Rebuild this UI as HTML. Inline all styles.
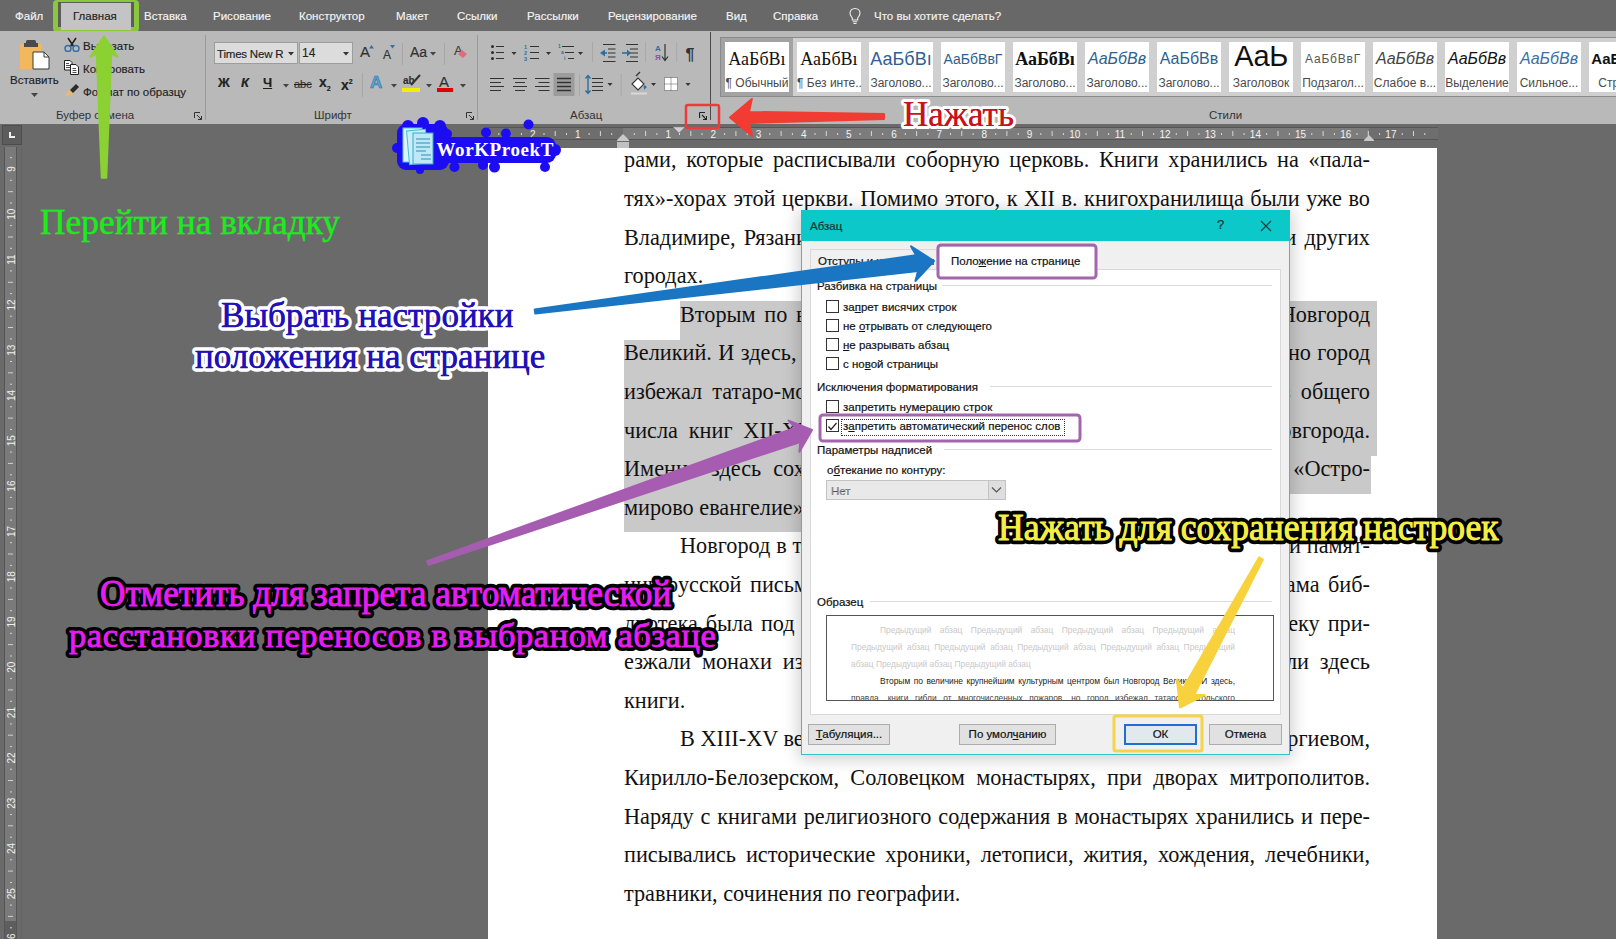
<!DOCTYPE html>
<html><head><meta charset="utf-8">
<style>
*{margin:0;padding:0;box-sizing:border-box}
html,body{width:1616px;height:939px;overflow:hidden;background:#6a6a6a;font-family:"Liberation Sans",sans-serif}
.abs{position:absolute}
#tabbar{position:absolute;left:0;top:0;width:1616px;height:31px;background:#686868}
.tab{position:absolute;top:9px;font-size:11.5px;color:#f4f4f4;white-space:nowrap;line-height:14px;-webkit-text-stroke:0.15px #f4f4f4}
#ribbon{position:absolute;left:0;top:31px;width:1616px;height:93px;background:#b9b9b9}
.rl{position:absolute;font-size:11.5px;color:#1e1e1e;white-space:nowrap;line-height:14px;-webkit-text-stroke:0.15px #1e1e1e}
.gl{position:absolute;top:108px;font-size:11.5px;color:#333;white-space:nowrap;line-height:14px}
.sep{position:absolute;width:1px;background:#9a9a9a}
#ruler{position:absolute;left:0;top:124px;width:1616px;height:24px;background:#6a6a6a}
#page{position:absolute;left:488px;top:148px;width:949px;height:800px;background:#fff}
.ln{position:absolute;left:624px;width:746px;height:38.6px;line-height:38.6px;font-family:"Liberation Serif",serif;font-size:22.25px;color:#111;white-space:nowrap}
.j{text-align:justify;text-align-last:justify}
.sel{position:absolute;background:#c9c9c9}
.dl{position:absolute;font-size:11.5px;line-height:14px;color:#111;white-space:nowrap;-webkit-text-stroke:0.2px #111}
.dl u{text-decoration:underline;text-underline-offset:1px}
.an{position:absolute;font-family:"Liberation Serif",serif;white-space:nowrap;line-height:40px}
.hr{position:absolute;height:1px;background:#dcdcdc}
.cb{position:absolute;left:826px;margin-top:-1px;width:13px;height:13px;background:#fff;border:1px solid #333}
.pv{position:absolute;left:24px;width:384px;font-size:8.4px;line-height:9px;white-space:nowrap;text-align:justify;text-align-last:justify;padding-right:0}
.btn{position:absolute;top:724px;height:21px;background:#e1e1e1;border:1px solid #adadad;font-size:11.5px;line-height:19px;text-align:center;color:#111;white-space:nowrap;-webkit-text-stroke:0.2px #111}
.btn u{text-decoration:underline}
</style></head><body>
<div id="tabbar">
  <div class="tab" style="left:15px">Файл</div>
  <div class="abs" style="left:53px;top:0;width:86px;height:32px;border:5px solid #8cc63f;border-top-width:2px;border-radius:4px;background:#5c5c5c"></div>
  <div class="abs" style="left:61px;top:3px;width:70px;height:27px;background:#c4c4c4"></div>
  <div class="tab" style="left:73px;color:#222;-webkit-text-stroke:0.15px #222">Главная</div>
  <div class="tab" style="left:144px">Вставка</div>
  <div class="tab" style="left:213px">Рисование</div>
  <div class="tab" style="left:299px">Конструктор</div>
  <div class="tab" style="left:396px">Макет</div>
  <div class="tab" style="left:457px">Ссылки</div>
  <div class="tab" style="left:527px">Рассылки</div>
  <div class="tab" style="left:608px">Рецензирование</div>
  <div class="tab" style="left:726px">Вид</div>
  <div class="tab" style="left:773px">Справка</div>
  <svg class="abs" style="left:848px;top:7px" width="14" height="18" viewBox="0 0 14 18"><path d="M7 1.5 C3.8 1.5 2 3.8 2 6.3 C2 8.5 3.6 9.8 4.3 11 V13 H9.7 V11 C10.4 9.8 12 8.5 12 6.3 C12 3.8 10.2 1.5 7 1.5Z" fill="none" stroke="#eee" stroke-width="1.1"/><path d="M4.8 14.8H9.2M5.5 16.5H8.5" stroke="#eee" stroke-width="1.1"/></svg>
  <div class="tab" style="left:874px">Что вы хотите сделать?</div>
</div>
<div id="ribbon">
</div>
<!-- clipboard group -->
<svg class="abs" style="left:17px;top:38px" width="36" height="33" viewBox="0 0 36 33">
  <rect x="3" y="6" width="22" height="25" rx="1" fill="#f2b95c"/>
  <rect x="9" y="2" width="10" height="5" rx="1.5" fill="#4a4a4a"/>
  <rect x="7" y="5" width="14" height="4" fill="#4a4a4a"/>
  <path d="M16 14 H27 L32 19 V31 H16 Z" fill="#fff" stroke="#3a3a3a" stroke-width="1"/>
  <path d="M27 14 V19 H32" fill="none" stroke="#3a3a3a" stroke-width="1"/>
</svg>
<div class="rl" style="left:10px;top:73px">Вставить</div>
<svg class="abs" style="left:31px;top:93px" width="7" height="4"><path d="M0 0 H7 L3.5 4Z" fill="#444"/></svg>
<svg class="abs" style="left:64px;top:37px" width="16" height="15" viewBox="0 0 16 15">
  <path d="M4 1 L10 10 M12 1 L6 10" stroke="#222" stroke-width="1.6" fill="none"/>
  <circle cx="4" cy="11.5" r="3" fill="none" stroke="#3b6ea5" stroke-width="1.5"/>
  <circle cx="12" cy="11.5" r="3" fill="none" stroke="#3b6ea5" stroke-width="1.5"/>
</svg>
<div class="rl" style="left:83px;top:39px">Вырезать</div>
<svg class="abs" style="left:64px;top:60px" width="15" height="15" viewBox="0 0 15 15">
  <path d="M0.5 0.5 H6 L8 2.5 V10 H0.5Z" fill="#fff" stroke="#222"/>
  <path d="M6.5 4.5 H12 L14.5 7 V14.5 H6.5Z" fill="#fff" stroke="#222"/>
  <path d="M2 3.5H5M2 5.5H6M2 7.5H6M8.5 8.5H12M8.5 10.5H12.5M8.5 12.5H12.5" stroke="#222" stroke-width="0.8"/>
</svg>
<div class="rl" style="left:83px;top:62px">Копировать</div>
<svg class="abs" style="left:64px;top:83px" width="16" height="16" viewBox="0 0 16 16">
  <path d="M1 14 L5 6 L10 11 Z" fill="#e6b97a"/>
  <path d="M6 7 L12 1 L15 4 L9 10Z" fill="#2a2a2a"/>
</svg>
<div class="rl" style="left:83px;top:85px">Формат по образцу</div>
<div class="gl" style="left:56px">Буфер обмена</div>
<svg class="abs" style="left:194px;top:112px" width="8" height="8"><path d="M0.5 0.5H6M0.5 0.5V6M3 3L7.5 7.5M7.5 4V7.5H4" stroke="#333" fill="none" stroke-width="1"/></svg>
<div class="sep" style="left:205px;top:35px;height:85px"></div>
<!-- font group -->
<div class="abs" style="left:214px;top:42px;width:84px;height:22px;background:#dcdcdc;border:1px solid #9d9d9d"></div>
<div class="rl" style="left:217px;top:47px;font-size:11.5px;letter-spacing:-0.2px;color:#222">Times New R</div>
<svg class="abs" style="left:288px;top:52px" width="6" height="4"><path d="M0 0H6L3 3.5Z" fill="#333"/></svg>
<div class="abs" style="left:299px;top:42px;width:54px;height:22px;background:#dcdcdc;border:1px solid #9d9d9d"></div>
<div class="rl" style="left:302px;top:46px;font-size:12px;color:#222">14</div>
<svg class="abs" style="left:343px;top:52px" width="6" height="4"><path d="M0 0H6L3 3.5Z" fill="#333"/></svg>
<div class="rl" style="left:360px;top:45px;font-size:15px;color:#333">A</div>
<svg class="abs" style="left:369px;top:45px" width="5" height="4"><path d="M0 3.5H5L2.5 0Z" fill="#3b6ea5"/></svg>
<div class="rl" style="left:383px;top:48px;font-size:12px;color:#333">A</div>
<svg class="abs" style="left:390px;top:45px" width="5" height="4"><path d="M0 0H5L2.5 3.5Z" fill="#3b6ea5"/></svg>
<div class="sep" style="left:402px;top:43px;height:22px;background:#a6a6a6"></div>
<div class="rl" style="left:410px;top:45px;font-size:14px;color:#333">Aa</div>
<svg class="abs" style="left:430px;top:52px" width="6" height="4"><path d="M0 0H6L3 3.5Z" fill="#444"/></svg>
<div class="sep" style="left:444px;top:43px;height:22px;background:#a6a6a6"></div>
<div class="rl" style="left:454px;top:44px;font-size:13px;color:#444">A</div>
<svg class="abs" style="left:457px;top:49px" width="11" height="10"><path d="M1 5 L5 1 L10 5 L6 9Z" fill="#e46a7a"/></svg>
<div class="rl" style="left:218px;top:76px;font-size:13px;font-weight:bold;color:#222">Ж</div>
<div class="rl" style="left:241px;top:76px;font-size:13px;font-weight:bold;font-style:italic;color:#222">К</div>
<div class="rl" style="left:263px;top:76px;font-size:13px;font-weight:bold;color:#222;text-decoration:underline">Ч</div>
<svg class="abs" style="left:283px;top:84px" width="6" height="4"><path d="M0 0H6L3 3.5Z" fill="#444"/></svg>
<div class="rl" style="left:294px;top:77px;font-size:11px;color:#333;text-decoration:line-through">abc</div>
<div class="rl" style="left:319px;top:75px;font-size:14px;font-weight:bold;color:#222">x<sub style="font-size:7px">2</sub></div>
<div class="rl" style="left:341px;top:75px;font-size:14px;font-weight:bold;color:#222">x<sup style="font-size:7px">2</sup></div>
<div class="sep" style="left:362px;top:73px;height:24px;background:#a6a6a6"></div>
<div class="rl" style="left:370px;top:76px;font-size:17px;color:#5aa6d8;font-weight:bold;-webkit-text-stroke:0.6px #2d6f9e">A</div>
<svg class="abs" style="left:391px;top:84px" width="6" height="4"><path d="M0 0H6L3 3.5Z" fill="#444"/></svg>
<div class="rl" style="left:403px;top:74px;font-size:10px;color:#333;font-weight:bold">ab</div>
<svg class="abs" style="left:408px;top:73px" width="14" height="14"><path d="M3 12 L12 2" stroke="#333" stroke-width="2"/></svg>
<div class="abs" style="left:402px;top:88px;width:18px;height:4px;background:#f0f000"></div>
<svg class="abs" style="left:426px;top:84px" width="6" height="4"><path d="M0 0H6L3 3.5Z" fill="#444"/></svg>
<div class="rl" style="left:439px;top:75px;font-size:15px;color:#333">A</div>
<div class="abs" style="left:437px;top:88px;width:16px;height:4px;background:#e00000"></div>
<svg class="abs" style="left:460px;top:84px" width="6" height="4"><path d="M0 0H6L3 3.5Z" fill="#444"/></svg>
<div class="gl" style="left:314px">Шрифт</div>
<svg class="abs" style="left:466px;top:112px" width="8" height="8"><path d="M0.5 0.5H6M0.5 0.5V6M3 3L7.5 7.5M7.5 4V7.5H4" stroke="#333" fill="none" stroke-width="1"/></svg>
<div class="sep" style="left:477px;top:35px;height:85px"></div>
<!-- paragraph group -->
<svg class="abs" style="left:480px;top:36px" width="230" height="64" viewBox="480 36 230 64">
  <g fill="#2e2e2e"><circle cx="492.5" cy="46.5" r="1.5"/><circle cx="492.5" cy="52.5" r="1.5"/><circle cx="492.5" cy="58.5" r="1.5"/></g>
  <path d="M496 46.5H504M496 52.5H504M496 58.5H504" stroke="#333" stroke-width="1.2"/>
  <path d="M511.5 52H516.5L514 55Z" fill="#333"/>
  <g font-size="5.5" fill="#2d6f9e" font-family="Liberation Sans" font-weight="bold"><text x="524" y="48.5">1</text><text x="524" y="54.5">2</text><text x="524" y="60.5">3</text></g>
  <path d="M530 46.5H539M530 52.5H539M530 58.5H539" stroke="#333" stroke-width="1.2"/>
  <path d="M546 52H551L548.5 55Z" fill="#333"/>
  <g font-size="5" fill="#2d6f9e" font-family="Liberation Sans" font-weight="bold"><text x="558" y="48">1</text><text x="561" y="54">a</text><text x="564" y="60">i</text></g>
  <path d="M562 46.5H574M565 52.5H574M568 58.5H574" stroke="#333" stroke-width="1.1"/>
  <path d="M578 52H583L580.5 55Z" fill="#333"/>
  <path d="M592.5 42V62" stroke="#a8a8a8"/>
  <path d="M603 44.5H615.5M608 49H615.5M608 53H615.5M608 57H615.5M603 61.5H615.5" stroke="#333" stroke-width="1.2"/>
  <path d="M600 53L605 49.5V56.5Z" fill="#2d6f9e"/><path d="M603 53H607" stroke="#2d6f9e" stroke-width="1.6"/>
  <path d="M626 44.5H638M630 49H638M630 53H638M630 57H638M626 61.5H638" stroke="#333" stroke-width="1.2"/>
  <path d="M627 49.5L631 53L627 56.5Z" fill="#2d6f9e"/><path d="M622 53H628" stroke="#2d6f9e" stroke-width="1.6"/>
  <path d="M645.5 42V62" stroke="#a8a8a8"/>
  <g font-size="8" font-weight="bold" font-family="Liberation Sans"><text x="655" y="51" fill="#2d6f9e">A</text><text x="655" y="60" fill="#8a4fa8">Я</text></g>
  <path d="M665 44V60M662 56.5L665 60.5L668 56.5" stroke="#333" stroke-width="1.2" fill="none"/>
  <path d="M676.7 42V62" stroke="#a8a8a8"/>
  <text x="685.5" y="60" font-size="16" font-weight="bold" fill="#333" font-family="Liberation Sans">¶</text>
  <path d="M490 78.5H504M490 82.5H501M490 86.5H504M490 90.5H501" stroke="#333" stroke-width="1.2"/>
  <path d="M513 78.5H527M515 82.5H525M513 86.5H527M515 90.5H525" stroke="#333" stroke-width="1.2"/>
  <path d="M535 78.5H549.5M538.5 82.5H549.5M535 86.5H549.5M538.5 90.5H549.5" stroke="#333" stroke-width="1.2"/>
  <rect x="553.5" y="73" width="21" height="23" fill="#9c9c9c"/>
  <path d="M557 78.5H571M557 82.5H571M557 86.5H571M557 90.5H571" stroke="#333" stroke-width="1.3"/>
  <path d="M579.5 74V96" stroke="#a8a8a8"/>
  <path d="M592 78.5H603M592 82.5H603M592 86.5H603M592 90.5H603" stroke="#333" stroke-width="1.2"/>
  <path d="M588 76V93M585.5 78.5L588 75.5L590.5 78.5M585.5 90.5L588 93.5L590.5 90.5" stroke="#2d6f9e" stroke-width="1.4" fill="none"/>
  <path d="M607.5 83H612.5L610 86Z" fill="#333"/>
  <path d="M621.2 74V96" stroke="#a8a8a8"/>
  <path d="M632 84L638 78L644 84L638 90Z" fill="#fff" stroke="#333" stroke-width="1.1"/>
  <path d="M636 76L640 72" stroke="#333" stroke-width="1.2"/>
  <path d="M644 85Q646 88 644 90" fill="#2d6f9e"/><circle cx="645" cy="87" r="1.5" fill="#2d6f9e"/>
  <path d="M631 93.5H647" stroke="#d8d8d8" stroke-width="2"/>
  <path d="M651 83H656L653.5 86Z" fill="#333"/>
  <rect x="664.5" y="77.5" width="13" height="13" fill="#fff"/>
  <path d="M664.5 77.5H677.5V90.5H664.5Z M664.5 84H677.5M671 77.5V90.5" stroke="#555" stroke-width="1" stroke-dasharray="1 1" fill="none"/>
  <path d="M685.5 83H690.5L688 86Z" fill="#333"/>
</svg>
<div class="gl" style="left:570px">Абзац</div>
<svg class="abs" style="left:699px;top:112px" width="8" height="8"><path d="M0.5 0.5H6M0.5 0.5V6M3 3L7.5 7.5M7.5 4V7.5H4" stroke="#222" fill="none" stroke-width="1.2"/></svg>
<div class="sep" style="left:710px;top:32px;height:88px;background:#4a4a4a"></div>
<!-- styles gallery -->
<div class="abs" style="left:720px;top:37px;width:900px;height:60px;background:#d0d0d0;border:1px solid #8a8a8a"></div>
<div class="abs" style="left:721px;top:38px;width:72px;height:58px;background:#a3a3a3"></div>
<div class="abs" style="left:725px;top:42px;width:64px;height:50px;background:#fff;overflow:hidden"><div class="abs" style="left:0;width:64px;text-align:center;top:5px;white-space:nowrap;line-height:24px;font-family:'Liberation Serif';font-size:18px;color:#111">АаБбВı</div><div class="abs" style="left:0;width:64px;text-align:center;top:34px;white-space:nowrap;font-size:12px;line-height:14px;color:#4a4a4a">¶ Обычный</div></div>
<div class="abs" style="left:797px;top:42px;width:64px;height:50px;background:#fff;overflow:hidden"><div class="abs" style="left:0;width:64px;text-align:center;top:5px;white-space:nowrap;line-height:24px;font-family:'Liberation Serif';font-size:18px;color:#111">АаБбВı</div><div class="abs" style="left:0;width:64px;text-align:center;top:34px;white-space:nowrap;font-size:12px;line-height:14px;color:#4a4a4a">¶ Без инте...</div></div>
<div class="abs" style="left:869px;top:42px;width:64px;height:50px;background:#fff;overflow:hidden"><div class="abs" style="left:0;width:64px;text-align:center;top:5px;white-space:nowrap;line-height:24px;font-family:'Liberation Sans';font-size:18px;color:#2f5f8f">АаБбВı</div><div class="abs" style="left:0;width:64px;text-align:center;top:34px;white-space:nowrap;font-size:12px;line-height:14px;color:#4a4a4a">Заголово...</div></div>
<div class="abs" style="left:941px;top:42px;width:64px;height:50px;background:#fff;overflow:hidden"><div class="abs" style="left:0;width:64px;text-align:center;top:5px;white-space:nowrap;line-height:24px;font-family:'Liberation Sans';font-size:14px;color:#2f5f8f">АаБбВвГ</div><div class="abs" style="left:0;width:64px;text-align:center;top:34px;white-space:nowrap;font-size:12px;line-height:14px;color:#4a4a4a">Заголово...</div></div>
<div class="abs" style="left:1013px;top:42px;width:64px;height:50px;background:#fff;overflow:hidden"><div class="abs" style="left:0;width:64px;text-align:center;top:5px;white-space:nowrap;line-height:24px;font-family:'Liberation Serif';font-size:18px;font-weight:bold;color:#111">АаБбВı</div><div class="abs" style="left:0;width:64px;text-align:center;top:34px;white-space:nowrap;font-size:12px;line-height:14px;color:#4a4a4a">Заголово...</div></div>
<div class="abs" style="left:1085px;top:42px;width:64px;height:50px;background:#fff;overflow:hidden"><div class="abs" style="left:0;width:64px;text-align:center;top:5px;white-space:nowrap;line-height:24px;font-family:'Liberation Sans';font-size:16px;font-style:italic;color:#2f5f8f">АаБбВв</div><div class="abs" style="left:0;width:64px;text-align:center;top:34px;white-space:nowrap;font-size:12px;line-height:14px;color:#4a4a4a">Заголово...</div></div>
<div class="abs" style="left:1157px;top:42px;width:64px;height:50px;background:#fff;overflow:hidden"><div class="abs" style="left:0;width:64px;text-align:center;top:5px;white-space:nowrap;line-height:24px;font-family:'Liberation Sans';font-size:16px;color:#2f5f8f">АаБбВв</div><div class="abs" style="left:0;width:64px;text-align:center;top:34px;white-space:nowrap;font-size:12px;line-height:14px;color:#4a4a4a">Заголово...</div></div>
<div class="abs" style="left:1229px;top:42px;width:64px;height:50px;background:#fff;overflow:hidden"><div class="abs" style="left:0;width:64px;text-align:center;top:5px;white-space:nowrap;line-height:24px;font-family:'Liberation Sans';font-size:29px;color:#111;letter-spacing:-0.5px;margin-top:-3px">АаЬ</div><div class="abs" style="left:0;width:64px;text-align:center;top:34px;white-space:nowrap;font-size:12px;line-height:14px;color:#4a4a4a">Заголовок</div></div>
<div class="abs" style="left:1301px;top:42px;width:64px;height:50px;background:#fff;overflow:hidden"><div class="abs" style="left:0;width:64px;text-align:center;top:5px;white-space:nowrap;line-height:24px;font-family:'Liberation Sans';font-size:12px;color:#555;letter-spacing:0.8px">АаБбВвГ</div><div class="abs" style="left:0;width:64px;text-align:center;top:34px;white-space:nowrap;font-size:12px;line-height:14px;color:#4a4a4a">Подзагол...</div></div>
<div class="abs" style="left:1373px;top:42px;width:64px;height:50px;background:#fff;overflow:hidden"><div class="abs" style="left:0;width:64px;text-align:center;top:5px;white-space:nowrap;line-height:24px;font-family:'Liberation Sans';font-size:16px;font-style:italic;color:#444">АаБбВв</div><div class="abs" style="left:0;width:64px;text-align:center;top:34px;white-space:nowrap;font-size:12px;line-height:14px;color:#4a4a4a">Слабое в...</div></div>
<div class="abs" style="left:1445px;top:42px;width:64px;height:50px;background:#fff;overflow:hidden"><div class="abs" style="left:0;width:64px;text-align:center;top:5px;white-space:nowrap;line-height:24px;font-family:'Liberation Sans';font-size:16px;font-style:italic;color:#111">АаБбВв</div><div class="abs" style="left:0;width:64px;text-align:center;top:34px;white-space:nowrap;font-size:12px;line-height:14px;color:#4a4a4a">Выделение</div></div>
<div class="abs" style="left:1517px;top:42px;width:64px;height:50px;background:#fff;overflow:hidden"><div class="abs" style="left:0;width:64px;text-align:center;top:5px;white-space:nowrap;line-height:24px;font-family:'Liberation Sans';font-size:16px;font-style:italic;color:#3a6ea5">АаБбВв</div><div class="abs" style="left:0;width:64px;text-align:center;top:34px;white-space:nowrap;font-size:12px;line-height:14px;color:#4a4a4a">Сильное...</div></div>
<div class="abs" style="left:1589px;top:42px;width:64px;height:50px;background:#fff;overflow:hidden"><div class="abs" style="left:0;width:64px;text-align:center;top:5px;white-space:nowrap;line-height:24px;font-family:'Liberation Sans';font-size:15px;font-weight:bold;color:#111">АаБбВв</div><div class="abs" style="left:0;width:64px;text-align:center;top:34px;white-space:nowrap;font-size:12px;line-height:14px;color:#4a4a4a">Строгий</div></div>
<div class="gl" style="left:1209px">Стили</div>

<div class="abs" style="left:488px;top:127px;width:950px;height:13px;background:#6e6e6e;border-top:1px solid #555;border-bottom:1px solid #555"></div>
<div class="abs" style="left:623px;top:128px;width:746px;height:11px;background:#7c7c7c"></div>
<svg class="abs" style="left:488px;top:124px" width="950" height="24" viewBox="488 124 950 24">
<rect x="498.3" y="133" width="1" height="2" fill="#d8d8d8"/>
<rect x="509.6" y="131" width="1" height="5" fill="#d8d8d8"/>
<rect x="520.9" y="133" width="1" height="2" fill="#d8d8d8"/>
<text x="532.7" y="137.5" font-size="10" fill="#f2f2f2" text-anchor="middle" font-family="Liberation Sans">2</text>
<rect x="543.5" y="133" width="1" height="2" fill="#d8d8d8"/>
<rect x="554.7" y="131" width="1" height="5" fill="#d8d8d8"/>
<rect x="566.0" y="133" width="1" height="2" fill="#d8d8d8"/>
<text x="577.8" y="137.5" font-size="10" fill="#f2f2f2" text-anchor="middle" font-family="Liberation Sans">1</text>
<rect x="588.6" y="133" width="1" height="2" fill="#d8d8d8"/>
<rect x="599.9" y="131" width="1" height="5" fill="#d8d8d8"/>
<rect x="611.2" y="133" width="1" height="2" fill="#d8d8d8"/>
<rect x="633.8" y="133" width="1" height="2" fill="#d8d8d8"/>
<rect x="645.1" y="131" width="1" height="5" fill="#d8d8d8"/>
<rect x="656.4" y="133" width="1" height="2" fill="#d8d8d8"/>
<text x="668.2" y="137.5" font-size="10" fill="#f2f2f2" text-anchor="middle" font-family="Liberation Sans">1</text>
<rect x="679.0" y="133" width="1" height="2" fill="#d8d8d8"/>
<rect x="690.3" y="131" width="1" height="5" fill="#d8d8d8"/>
<rect x="701.5" y="133" width="1" height="2" fill="#d8d8d8"/>
<text x="713.3" y="137.5" font-size="10" fill="#f2f2f2" text-anchor="middle" font-family="Liberation Sans">2</text>
<rect x="724.1" y="133" width="1" height="2" fill="#d8d8d8"/>
<rect x="735.4" y="131" width="1" height="5" fill="#d8d8d8"/>
<rect x="746.7" y="133" width="1" height="2" fill="#d8d8d8"/>
<text x="758.5" y="137.5" font-size="10" fill="#f2f2f2" text-anchor="middle" font-family="Liberation Sans">3</text>
<rect x="769.3" y="133" width="1" height="2" fill="#d8d8d8"/>
<rect x="780.6" y="131" width="1" height="5" fill="#d8d8d8"/>
<rect x="791.9" y="133" width="1" height="2" fill="#d8d8d8"/>
<text x="803.7" y="137.5" font-size="10" fill="#f2f2f2" text-anchor="middle" font-family="Liberation Sans">4</text>
<rect x="814.5" y="133" width="1" height="2" fill="#d8d8d8"/>
<rect x="825.8" y="131" width="1" height="5" fill="#d8d8d8"/>
<rect x="837.1" y="133" width="1" height="2" fill="#d8d8d8"/>
<text x="848.9" y="137.5" font-size="10" fill="#f2f2f2" text-anchor="middle" font-family="Liberation Sans">5</text>
<rect x="859.6" y="133" width="1" height="2" fill="#d8d8d8"/>
<rect x="870.9" y="131" width="1" height="5" fill="#d8d8d8"/>
<rect x="882.2" y="133" width="1" height="2" fill="#d8d8d8"/>
<text x="894.0" y="137.5" font-size="10" fill="#f2f2f2" text-anchor="middle" font-family="Liberation Sans">6</text>
<rect x="904.8" y="133" width="1" height="2" fill="#d8d8d8"/>
<rect x="916.1" y="131" width="1" height="5" fill="#d8d8d8"/>
<rect x="927.4" y="133" width="1" height="2" fill="#d8d8d8"/>
<text x="939.2" y="137.5" font-size="10" fill="#f2f2f2" text-anchor="middle" font-family="Liberation Sans">7</text>
<rect x="950.0" y="133" width="1" height="2" fill="#d8d8d8"/>
<rect x="961.3" y="131" width="1" height="5" fill="#d8d8d8"/>
<rect x="972.6" y="133" width="1" height="2" fill="#d8d8d8"/>
<text x="984.4" y="137.5" font-size="10" fill="#f2f2f2" text-anchor="middle" font-family="Liberation Sans">8</text>
<rect x="995.2" y="133" width="1" height="2" fill="#d8d8d8"/>
<rect x="1006.4" y="131" width="1" height="5" fill="#d8d8d8"/>
<rect x="1017.7" y="133" width="1" height="2" fill="#d8d8d8"/>
<text x="1029.5" y="137.5" font-size="10" fill="#f2f2f2" text-anchor="middle" font-family="Liberation Sans">9</text>
<rect x="1040.3" y="133" width="1" height="2" fill="#d8d8d8"/>
<rect x="1051.6" y="131" width="1" height="5" fill="#d8d8d8"/>
<rect x="1062.9" y="133" width="1" height="2" fill="#d8d8d8"/>
<text x="1074.7" y="137.5" font-size="10" fill="#f2f2f2" text-anchor="middle" font-family="Liberation Sans">10</text>
<rect x="1085.5" y="133" width="1" height="2" fill="#d8d8d8"/>
<rect x="1096.8" y="131" width="1" height="5" fill="#d8d8d8"/>
<rect x="1108.1" y="133" width="1" height="2" fill="#d8d8d8"/>
<text x="1119.9" y="137.5" font-size="10" fill="#f2f2f2" text-anchor="middle" font-family="Liberation Sans">11</text>
<rect x="1130.7" y="133" width="1" height="2" fill="#d8d8d8"/>
<rect x="1142.0" y="131" width="1" height="5" fill="#d8d8d8"/>
<rect x="1153.2" y="133" width="1" height="2" fill="#d8d8d8"/>
<text x="1165.0" y="137.5" font-size="10" fill="#f2f2f2" text-anchor="middle" font-family="Liberation Sans">12</text>
<rect x="1175.8" y="133" width="1" height="2" fill="#d8d8d8"/>
<rect x="1187.1" y="131" width="1" height="5" fill="#d8d8d8"/>
<rect x="1198.4" y="133" width="1" height="2" fill="#d8d8d8"/>
<text x="1210.2" y="137.5" font-size="10" fill="#f2f2f2" text-anchor="middle" font-family="Liberation Sans">13</text>
<rect x="1221.0" y="133" width="1" height="2" fill="#d8d8d8"/>
<rect x="1232.3" y="131" width="1" height="5" fill="#d8d8d8"/>
<rect x="1243.6" y="133" width="1" height="2" fill="#d8d8d8"/>
<text x="1255.4" y="137.5" font-size="10" fill="#f2f2f2" text-anchor="middle" font-family="Liberation Sans">14</text>
<rect x="1266.2" y="133" width="1" height="2" fill="#d8d8d8"/>
<rect x="1277.5" y="131" width="1" height="5" fill="#d8d8d8"/>
<rect x="1288.8" y="133" width="1" height="2" fill="#d8d8d8"/>
<text x="1300.6" y="137.5" font-size="10" fill="#f2f2f2" text-anchor="middle" font-family="Liberation Sans">15</text>
<rect x="1311.3" y="133" width="1" height="2" fill="#d8d8d8"/>
<rect x="1322.6" y="131" width="1" height="5" fill="#d8d8d8"/>
<rect x="1333.9" y="133" width="1" height="2" fill="#d8d8d8"/>
<text x="1345.7" y="137.5" font-size="10" fill="#f2f2f2" text-anchor="middle" font-family="Liberation Sans">16</text>
<rect x="1356.5" y="133" width="1" height="2" fill="#d8d8d8"/>
<rect x="1367.8" y="131" width="1" height="5" fill="#d8d8d8"/>
<rect x="1379.1" y="133" width="1" height="2" fill="#d8d8d8"/>
<text x="1390.9" y="137.5" font-size="10" fill="#f2f2f2" text-anchor="middle" font-family="Liberation Sans">17</text>
<rect x="1401.7" y="133" width="1" height="2" fill="#d8d8d8"/>
<rect x="1413.0" y="131" width="1" height="5" fill="#d8d8d8"/>
<rect x="1424.3" y="133" width="1" height="2" fill="#d8d8d8"/>


</svg>
<svg class="abs" style="left:610px;top:124px" width="80" height="24"><path d="M63 3 L75 3 L69 9Z" fill="#d0d0d0" stroke="#888" stroke-width="0.6"/><path d="M7 16 L13 10 L19 16 V17 H7Z" fill="#c8c8c8"/><rect x="7" y="18" width="12" height="6" fill="#c0c0c0"/></svg>
<svg class="abs" style="left:1360px;top:124px" width="20" height="24"><path d="M4 16 L9 11 L14 16 V17 H4Z" fill="#c8c8c8"/></svg>
<div class="abs" style="left:0;top:124px;width:23px;height:815px;background:#6a6a6a"></div>
<div class="abs" style="left:2px;top:125px;width:20px;height:20px;background:#5c5c5c;border:1px solid #4d4d4d"></div>
<svg class="abs" style="left:7px;top:130px" width="10" height="10"><path d="M3 2 V7 H8" stroke="#f0f0f0" stroke-width="2" fill="none"/></svg>
<div class="abs" style="left:4px;top:147px;width:13px;height:792px;background:#7a7a7a;border-left:1px solid #555;border-right:1px solid #555"></div>
<div class="abs" style="left:5px;top:921px;width:11px;height:18px;background:#5e5e5e"></div>
<div class="abs" style="left:21px;top:147px;width:1px;height:792px;background:#626262"></div>
<svg class="abs" style="left:0;top:147px" width="23" height="792" viewBox="0 147 23 792">
<text x="0" y="0" transform="translate(14.5 123.7) rotate(-90)" font-size="10" fill="#f0f0f0" text-anchor="middle" font-family="Liberation Sans">8</text>
<rect x="10" y="134.5" width="2" height="1" fill="#d0d0d0"/>
<rect x="8" y="145.8" width="5" height="1" fill="#d0d0d0"/>
<rect x="10" y="157.2" width="2" height="1" fill="#d0d0d0"/>
<text x="0" y="0" transform="translate(14.5 169.0) rotate(-90)" font-size="10" fill="#f0f0f0" text-anchor="middle" font-family="Liberation Sans">9</text>
<rect x="10" y="179.8" width="2" height="1" fill="#d0d0d0"/>
<rect x="8" y="191.2" width="5" height="1" fill="#d0d0d0"/>
<rect x="10" y="202.5" width="2" height="1" fill="#d0d0d0"/>
<text x="0" y="0" transform="translate(14.5 214.3) rotate(-90)" font-size="10" fill="#f0f0f0" text-anchor="middle" font-family="Liberation Sans">10</text>
<rect x="10" y="225.1" width="2" height="1" fill="#d0d0d0"/>
<rect x="8" y="236.5" width="5" height="1" fill="#d0d0d0"/>
<rect x="10" y="247.8" width="2" height="1" fill="#d0d0d0"/>
<text x="0" y="0" transform="translate(14.5 259.6) rotate(-90)" font-size="10" fill="#f0f0f0" text-anchor="middle" font-family="Liberation Sans">11</text>
<rect x="10" y="270.4" width="2" height="1" fill="#d0d0d0"/>
<rect x="8" y="281.8" width="5" height="1" fill="#d0d0d0"/>
<rect x="10" y="293.1" width="2" height="1" fill="#d0d0d0"/>
<text x="0" y="0" transform="translate(14.5 304.9) rotate(-90)" font-size="10" fill="#f0f0f0" text-anchor="middle" font-family="Liberation Sans">12</text>
<rect x="10" y="315.7" width="2" height="1" fill="#d0d0d0"/>
<rect x="8" y="327.0" width="5" height="1" fill="#d0d0d0"/>
<rect x="10" y="338.4" width="2" height="1" fill="#d0d0d0"/>
<text x="0" y="0" transform="translate(14.5 350.2) rotate(-90)" font-size="10" fill="#f0f0f0" text-anchor="middle" font-family="Liberation Sans">13</text>
<rect x="10" y="361.0" width="2" height="1" fill="#d0d0d0"/>
<rect x="8" y="372.3" width="5" height="1" fill="#d0d0d0"/>
<rect x="10" y="383.7" width="2" height="1" fill="#d0d0d0"/>
<text x="0" y="0" transform="translate(14.5 395.5) rotate(-90)" font-size="10" fill="#f0f0f0" text-anchor="middle" font-family="Liberation Sans">14</text>
<rect x="10" y="406.3" width="2" height="1" fill="#d0d0d0"/>
<rect x="8" y="417.6" width="5" height="1" fill="#d0d0d0"/>
<rect x="10" y="429.0" width="2" height="1" fill="#d0d0d0"/>
<text x="0" y="0" transform="translate(14.5 440.8) rotate(-90)" font-size="10" fill="#f0f0f0" text-anchor="middle" font-family="Liberation Sans">15</text>
<rect x="10" y="451.6" width="2" height="1" fill="#d0d0d0"/>
<rect x="8" y="462.9" width="5" height="1" fill="#d0d0d0"/>
<rect x="10" y="474.3" width="2" height="1" fill="#d0d0d0"/>
<text x="0" y="0" transform="translate(14.5 486.1) rotate(-90)" font-size="10" fill="#f0f0f0" text-anchor="middle" font-family="Liberation Sans">16</text>
<rect x="10" y="496.9" width="2" height="1" fill="#d0d0d0"/>
<rect x="8" y="508.2" width="5" height="1" fill="#d0d0d0"/>
<rect x="10" y="519.6" width="2" height="1" fill="#d0d0d0"/>
<text x="0" y="0" transform="translate(14.5 531.4) rotate(-90)" font-size="10" fill="#f0f0f0" text-anchor="middle" font-family="Liberation Sans">17</text>
<rect x="10" y="542.2" width="2" height="1" fill="#d0d0d0"/>
<rect x="8" y="553.5" width="5" height="1" fill="#d0d0d0"/>
<rect x="10" y="564.9" width="2" height="1" fill="#d0d0d0"/>
<text x="0" y="0" transform="translate(14.5 576.7) rotate(-90)" font-size="10" fill="#f0f0f0" text-anchor="middle" font-family="Liberation Sans">18</text>
<rect x="10" y="587.5" width="2" height="1" fill="#d0d0d0"/>
<rect x="8" y="598.9" width="5" height="1" fill="#d0d0d0"/>
<rect x="10" y="610.2" width="2" height="1" fill="#d0d0d0"/>
<text x="0" y="0" transform="translate(14.5 622.0) rotate(-90)" font-size="10" fill="#f0f0f0" text-anchor="middle" font-family="Liberation Sans">19</text>
<rect x="10" y="632.8" width="2" height="1" fill="#d0d0d0"/>
<rect x="8" y="644.1" width="5" height="1" fill="#d0d0d0"/>
<rect x="10" y="655.5" width="2" height="1" fill="#d0d0d0"/>
<text x="0" y="0" transform="translate(14.5 667.3) rotate(-90)" font-size="10" fill="#f0f0f0" text-anchor="middle" font-family="Liberation Sans">20</text>
<rect x="10" y="678.1" width="2" height="1" fill="#d0d0d0"/>
<rect x="8" y="689.4" width="5" height="1" fill="#d0d0d0"/>
<rect x="10" y="700.8" width="2" height="1" fill="#d0d0d0"/>
<text x="0" y="0" transform="translate(14.5 712.6) rotate(-90)" font-size="10" fill="#f0f0f0" text-anchor="middle" font-family="Liberation Sans">21</text>
<rect x="10" y="723.4" width="2" height="1" fill="#d0d0d0"/>
<rect x="8" y="734.7" width="5" height="1" fill="#d0d0d0"/>
<rect x="10" y="746.1" width="2" height="1" fill="#d0d0d0"/>
<text x="0" y="0" transform="translate(14.5 757.9) rotate(-90)" font-size="10" fill="#f0f0f0" text-anchor="middle" font-family="Liberation Sans">22</text>
<rect x="10" y="768.7" width="2" height="1" fill="#d0d0d0"/>
<rect x="8" y="780.0" width="5" height="1" fill="#d0d0d0"/>
<rect x="10" y="791.4" width="2" height="1" fill="#d0d0d0"/>
<text x="0" y="0" transform="translate(14.5 803.2) rotate(-90)" font-size="10" fill="#f0f0f0" text-anchor="middle" font-family="Liberation Sans">23</text>
<rect x="10" y="814.0" width="2" height="1" fill="#d0d0d0"/>
<rect x="8" y="825.3" width="5" height="1" fill="#d0d0d0"/>
<rect x="10" y="836.7" width="2" height="1" fill="#d0d0d0"/>
<text x="0" y="0" transform="translate(14.5 848.5) rotate(-90)" font-size="10" fill="#f0f0f0" text-anchor="middle" font-family="Liberation Sans">24</text>
<rect x="10" y="859.3" width="2" height="1" fill="#d0d0d0"/>
<rect x="8" y="870.6" width="5" height="1" fill="#d0d0d0"/>
<rect x="10" y="882.0" width="2" height="1" fill="#d0d0d0"/>
<text x="0" y="0" transform="translate(14.5 893.8) rotate(-90)" font-size="10" fill="#f0f0f0" text-anchor="middle" font-family="Liberation Sans">25</text>
<rect x="10" y="904.6" width="2" height="1" fill="#d0d0d0"/>
<rect x="8" y="915.9" width="5" height="1" fill="#d0d0d0"/>
<rect x="10" y="927.3" width="2" height="1" fill="#d0d0d0"/>
<text x="0" y="0" transform="translate(14.5 939.1) rotate(-90)" font-size="10" fill="#f0f0f0" text-anchor="middle" font-family="Liberation Sans">26</text>
<rect x="10" y="949.9" width="2" height="1" fill="#d0d0d0"/>
<rect x="8" y="961.2" width="5" height="1" fill="#d0d0d0"/>
<rect x="10" y="972.6" width="2" height="1" fill="#d0d0d0"/>
</svg>
<div id="page"></div>
<div class="sel" style="left:680px;top:301px;width:697px;height:39px"></div>
<div class="sel" style="left:624px;top:339.6px;width:753px;height:116px"></div>
<div class="sel" style="left:624px;top:455px;width:747px;height:39px"></div>
<div class="sel" style="left:624px;top:493.5px;width:300px;height:38.5px"></div>
<div class="ln j" style="top:141.4px;left:624px;width:746px">рами, которые расписывали соборную церковь. Книги хранились на «пала-</div>
<div class="ln j" style="top:180.0px;left:624px;width:746px">тях»-хорах этой церкви. Помимо этого, к XII в. книгохранилища были уже во</div>
<div class="ln j" style="top:218.6px;left:624px;width:746px">Владимире, Рязани, Ростове, Суздале, Смоленске, Полоцке, Галиче и других</div>
<div class="ln" style="top:257.2px;left:624px;width:746px">городах.</div>
<div class="ln j" style="top:295.8px;left:680px;width:690px">Вторым по величине крупнейшим культурным центром был Новгород</div>
<div class="ln j" style="top:334.4px;left:624px;width:746px">Великий. И здесь, правда, книги гибли от многочисленных пожаров, но город</div>
<div class="ln j" style="top:373.0px;left:624px;width:746px">избежал татаро-монгольского нашествия, и сохранилось гораздо из общего</div>
<div class="ln j" style="top:411.6px;left:624px;width:746px">числа книг XII-XIV вв. более половины происходит из земель Новгорода.</div>
<div class="ln j" style="top:450.2px;left:624px;width:746px">Именно здесь сохранилось древнейшее датированное рукописное «Остро-</div>
<div class="ln" style="top:488.8px;left:624px;width:746px">мирово евангелие» 1056-1057 гг.</div>
<div class="ln j" style="top:527.4px;left:680px;width:690px">Новгород в то время был главным центром древней книжности и памят-</div>
<div class="ln j" style="top:566.0px;left:624px;width:746px">ник русской письменности. При Софийском соборе была собрана сама биб-</div>
<div class="ln j" style="top:604.6px;left:624px;width:746px">лиотека была под надзором новгородского архиепископа. В библиотеку при-</div>
<div class="ln j" style="top:643.2px;left:624px;width:746px">езжали монахи из разных монастырей, которые часто переписывали здесь</div>
<div class="ln" style="top:681.8px;left:624px;width:746px">книги.</div>
<div class="ln j" style="top:720.4px;left:680px;width:690px">В XIII-XV веках книжные собрания создавались при Троице-Сергиевом,</div>
<div class="ln j" style="top:759.0px;left:624px;width:746px">Кирилло-Белозерском, Соловецком монастырях, при дворах митрополитов.</div>
<div class="ln j" style="top:797.6px;left:624px;width:746px">Наряду с книгами религиозного содержания в монастырях хранились и пере-</div>
<div class="ln j" style="top:836.2px;left:624px;width:746px">писывались исторические хроники, летописи, жития, хождения, лечебники,</div>
<div class="ln" style="top:874.8px;left:624px;width:746px">травники, сочинения по географии.</div>

<!-- dialog -->
<div class="abs" style="left:801px;top:210px;width:489px;height:545px;box-shadow:0 2px 16px 2px rgba(0,0,0,0.2)"></div>
<div class="abs" style="left:801px;top:210px;width:489px;height:545px;background:#f0f0f0;border:1px solid #36c2c4"></div>
<div class="abs" style="left:801px;top:210px;width:489px;height:31px;background:#0cc8c9"></div>
<div class="dl" style="left:810px;top:219px;color:#1f3f3f">Абзац</div>
<div class="dl" style="left:1217px;top:218px;font-size:13px;color:#1f3f3f">?</div>
<svg class="abs" style="left:1260px;top:220px" width="12" height="12"><path d="M1 1L11 11M11 1L1 11" stroke="#1f3f3f" stroke-width="1.2"/></svg>
<!-- tabs -->
<div class="abs" style="left:810px;top:249px;width:127px;height:21px;background:#f0f0f0;border:1px solid #d9d9d9;border-bottom:none"></div>
<div class="dl" style="left:818px;top:254px">Отступы и интервалы</div>
<div class="abs" style="left:810px;top:269px;width:471px;height:446px;background:#fff;border:1px solid #d9d9d9"></div>
<div class="abs" style="left:937px;top:246px;width:160px;height:25px;background:#fff;border:1px solid #d9d9d9;border-bottom:none"></div>
<div class="dl" style="left:951px;top:254px">Поло<u>ж</u>ение на странице</div>
<div class="dl" style="left:817px;top:279px">Разбивка на страницы</div>
<div class="hr" style="left:942px;top:285px;width:330px"></div>
<div class="cb" style="top:301px"></div><div class="dl" style="left:843px;top:300px">за<u>п</u>рет висячих строк</div>
<div class="cb" style="top:320px"></div><div class="dl" style="left:843px;top:319px">не <u>о</u>трывать от следующего</div>
<div class="cb" style="top:339px"></div><div class="dl" style="left:843px;top:338px"><u>н</u>е разрывать абзац</div>
<div class="cb" style="top:358px"></div><div class="dl" style="left:843px;top:357px">с но<u>в</u>ой страницы</div>
<div class="dl" style="left:817px;top:380px">Исключения форматирования</div>
<div class="hr" style="left:990px;top:386px;width:282px"></div>
<div class="cb" style="top:401px"></div><div class="dl" style="left:843px;top:400px">запретить нумерацию строк</div>
<div class="cb" style="top:420px"></div>
<svg class="abs" style="left:826px;top:420px" width="13" height="13"><path d="M2.5 6.5 L5 9.5 L10.5 3" stroke="#222" stroke-width="1.2" fill="none"/></svg>
<div class="abs" style="left:841px;top:419px;width:224px;height:17px;border:1px dotted #333"></div>
<div class="dl" style="left:843px;top:419px">з<u>а</u>претить автоматический перенос слов</div>
<div class="dl" style="left:817px;top:443px">Параметры надписей</div>
<div class="hr" style="left:944px;top:449px;width:328px"></div>
<div class="dl" style="left:827px;top:463px">о<u>б</u>текание по контуру:</div>
<div class="abs" style="left:826px;top:480px;width:180px;height:20px;background:#e9e9e9;border:1px solid #c3c3c3"></div>
<div class="abs" style="left:988px;top:481px;width:17px;height:18px;background:#dedede;border-left:1px solid #c3c3c3"></div>
<svg class="abs" style="left:991px;top:486px" width="11" height="8"><path d="M1 1.5 L5.5 6 L10 1.5" stroke="#555" stroke-width="1.2" fill="none"/></svg>
<div class="dl" style="left:831px;top:484px;color:#9a9a9a">Нет</div>
<div class="dl" style="left:817px;top:595px">Образец</div>
<div class="hr" style="left:870px;top:601px;width:402px"></div>
<div class="abs" style="left:826px;top:615px;width:448px;height:86px;background:#fff;border:1px solid #555;overflow:hidden">
 <div class="pv" style="top:10px;color:#c8c8c8;padding-left:29px">Предыдущий абзац Предыдущий абзац Предыдущий абзац Предыдущий абзац</div>
 <div class="pv" style="top:27px;color:#c8c8c8">Предыдущий абзац Предыдущий абзац Предыдущий абзац Предыдущий абзац Предыдущий</div>
 <div class="pv" style="top:44px;color:#c8c8c8;text-align-last:left">абзац Предыдущий абзац Предыдущий абзац</div>
 <div class="pv" style="top:61px;color:#222;padding-left:29px">Вторым по величине крупнейшим культурным центром был Новгород Великий. И здесь,</div>
 <div class="pv" style="top:78px;color:#444">правда, книги гибли от многочисленных пожаров, но город избежал татаро-монгольского</div>
</div>
<!-- buttons -->
<div class="btn" style="left:808px;width:82px"><u>Т</u>абуляция...</div>
<div class="btn" style="left:959px;width:97px">По умол<u>ч</u>анию</div>
<div class="btn" style="left:1124px;width:73px;border:2px solid #1f6fd0;line-height:17px;background:#e1e8ee">ОК</div>
<div class="btn" style="left:1209px;width:73px">Отмена</div>

<!-- annotations -->
<svg class="abs" style="left:0;top:0" width="1616" height="939" viewBox="0 0 1616 939">
  <!-- red box -->
  <rect x="686" y="105" width="33" height="23" rx="2" fill="none" stroke="#ee3a3a" stroke-width="2.5"/>
  <!-- red arrow -->
  <path d="M884.0 114.0 L749.0 111.9 L751.9 98.9 L730.0 117.5 L752.1 135.9 L749.0 122.9 L884.0 119.0 Z" fill="#f03c32" stroke="#f03c32" stroke-width="2" stroke-linejoin="round"/>
  <!-- green arrow -->
  <path d="M106.5 178.0 L111.5 54.0 L118.0 57.0 L104.0 36.0 L90.0 57.0 L96.5 54.0 L101.5 178.0 Z" fill="#8cd132" stroke="#8cd132" stroke-width="1.5" stroke-linejoin="round"/>
  <!-- blue arrow -->
  <path d="M535.3 313.5 L918.1 271.1 L915.4 281.0 L934.0 261.0 L911.0 246.3 L916.1 255.2 L534.7 309.5 Z" fill="#1a76c2" stroke="#1a76c2" stroke-width="2" stroke-linejoin="round"/>
  <!-- purple boxes -->
  <rect x="938" y="245" width="158" height="33" rx="3" fill="none" stroke="#a366ae" stroke-width="3"/>
  <rect x="820" y="415" width="260" height="26" rx="3" fill="none" stroke="#a366ae" stroke-width="3"/>
  <!-- purple arrow -->
  <path d="M428.7 564.9 L800.3 442.0 L799.4 451.8 L812.0 430.0 L788.6 420.6 L795.4 427.8 L427.3 561.1 Z" fill="#a65cb0" stroke="#a65cb0" stroke-width="2" stroke-linejoin="round"/>
  <!-- yellow box -->
  <rect x="1114" y="716" width="88" height="35" rx="2" fill="none" stroke="#f5d34a" stroke-width="3"/>
  <!-- yellow arrow -->
  <path d="M1259.1 557.4 L1182.9 688.6 L1176.9 679.7 L1180.0 707.5 L1205.0 694.9 L1194.3 694.8 L1262.9 559.6 Z" fill="#f8d23c" stroke="#f8d23c" stroke-width="2" stroke-linejoin="round"/>
</svg>
<svg class="abs" style="left:0;top:0" width="1616" height="939" viewBox="0 0 1616 939" font-family="Liberation Serif">
<text transform="translate(903 125.5) scale(1 1.03)" font-size="35" fill="#c8121c" stroke="#fff" stroke-width="6" stroke-linejoin="round" paint-order="stroke">Нажать</text>
<text transform="translate(903 125.5) scale(1 1.03)" font-size="35" fill="#c8121c" stroke="#c8121c" stroke-width="0">Нажать</text>
<text transform="translate(40 234.4) scale(1 1.0)" font-size="35.4" fill="#1aee1a" stroke="#1aee1a" stroke-width="0.4">Перейти на вкладку</text>
<text transform="translate(221 326.5) scale(1 1.04)" font-size="35.1" fill="#1f10b8" stroke="#fff" stroke-width="7" stroke-linejoin="round" paint-order="stroke">Выбрать настройки</text>
<text transform="translate(221 326.5) scale(1 1.04)" font-size="35.1" fill="#1f10b8" stroke="#1f10b8" stroke-width="0.4">Выбрать настройки</text>
<text transform="translate(195 368.3) scale(1 1.04)" font-size="35" fill="#1f10b8" stroke="#fff" stroke-width="7" stroke-linejoin="round" paint-order="stroke">положения на странице</text>
<text transform="translate(195 368.3) scale(1 1.04)" font-size="35" fill="#1f10b8" stroke="#1f10b8" stroke-width="0.4">положения на странице</text>
<text transform="translate(100 606) scale(1 1.05)" font-size="35.25" fill="#e41cf0" stroke="#000" stroke-width="8" stroke-linejoin="round" paint-order="stroke">Отметить для запрета автоматической</text>
<text transform="translate(100 606) scale(1 1.05)" font-size="35.25" fill="#e41cf0" stroke="#e41cf0" stroke-width="0.8">Отметить для запрета автоматической</text>
<text transform="translate(69 646.6) scale(1 1.0)" font-size="34.5" letter-spacing="0.55" fill="#e41cf0" stroke="#000" stroke-width="8" stroke-linejoin="round" paint-order="stroke">расстановки переносов в выбраном абзаце</text>
<text transform="translate(69 646.6) scale(1 1.0)" font-size="34.5" letter-spacing="0.55" fill="#e41cf0" stroke="#e41cf0" stroke-width="0.8">расстановки переносов в выбраном абзаце</text>
<text transform="translate(998 540) scale(1 1.04)" font-size="35.6" fill="#f4ee44" stroke="#000" stroke-width="8" stroke-linejoin="round" paint-order="stroke">Нажать для сохранения настроек</text>
<text transform="translate(998 540) scale(1 1.04)" font-size="35.6" fill="#f4ee44" stroke="#f4ee44" stroke-width="0.8">Нажать для сохранения настроек</text>
</svg>
<!-- logo -->
<svg class="abs" style="left:390px;top:116px" width="172" height="62" viewBox="390 116 172 62">
  <g fill="#1c0cf2">
    <rect x="397" y="124" width="52" height="46" rx="9"/>
    <rect x="430" y="137" width="126" height="26" rx="9"/>
    <circle cx="408" cy="126" r="6"/><circle cx="423" cy="123" r="6"/><circle cx="440" cy="126" r="6"/><circle cx="447" cy="134" r="5"/>
    <circle cx="486" cy="132.5" r="5"/><circle cx="506" cy="133.5" r="5"/><circle cx="528.5" cy="124.5" r="5"/>
    <circle cx="454.5" cy="167" r="5"/><circle cx="483" cy="165" r="5"/><circle cx="494.5" cy="167" r="5.5"/><circle cx="545" cy="167" r="5"/>
    <circle cx="397" cy="148" r="5"/><circle cx="555" cy="150" r="6"/><circle cx="420" cy="170" r="4"/>
  </g>
  <g>
    <rect x="403" y="128" width="19" height="34" fill="#d8f4fa" stroke="#56c6e6" stroke-width="1"/>
    <rect x="408" y="130" width="19" height="34" fill="#c9eef8" stroke="#4ab8d8" stroke-width="1" transform="rotate(-5 418 147)"/>
    <rect x="413" y="133" width="20" height="31" fill="#bfe8f5" stroke="#3aa8cc" stroke-width="1"/>
    <path d="M416 139H430M416 143H430M416 147H430M416 151H426M421 155H431M421 159H431" stroke="#2a8fb8" stroke-width="1.2"/>
  </g>
  <text x="436.5" y="156" font-family="Liberation Serif" font-weight="bold" font-size="19" letter-spacing="0.6" fill="#fff">WorKProekT</text>
</svg>
</body></html>
